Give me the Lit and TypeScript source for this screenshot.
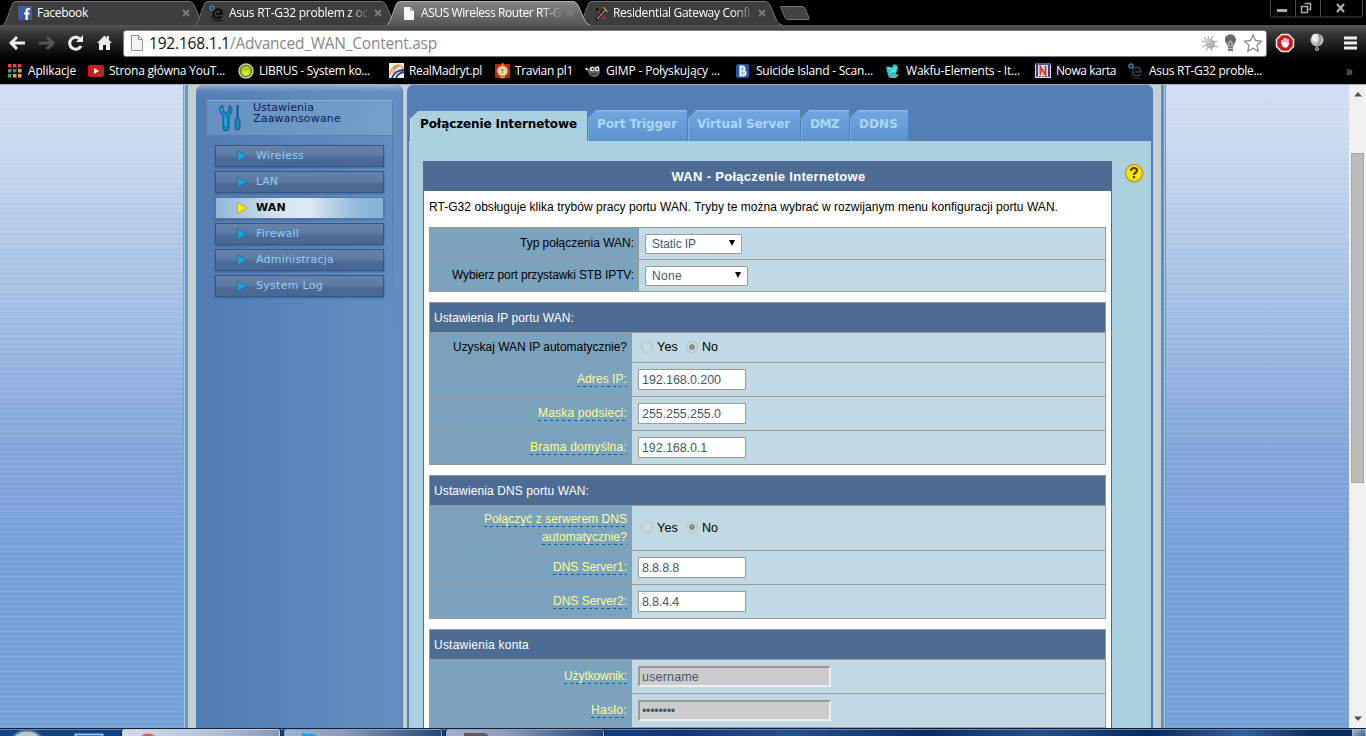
import { LitElement, html, css, svg } from "lit";
import { customElement } from "lit/decorators.js";

const t = (text: string, w: number, cls = "") => html`<span class="fit ${cls}" data-w=${w}>${text}</span>`;

const ie = (dark: string) => svg`
  <path d="M4.5 8.5A4.2 4.2 0 0 1 13 8.6H7M4.5 8.5a4.4 4.4 0 0 0 8 2.6" fill="none" stroke=${dark} stroke-width="2.2"/>
  <path d="M3 11c0 3 2 4.600 4.500 4.600h6" fill="none" stroke=${dark} stroke-width="1"/>
  <circle cx="3" cy="3" r="2" fill="none" stroke="#2b86b4" stroke-width="1.500"/>`;
const icon = (body: unknown, w = 16) => html`<svg class="ico" width=${w} height="16" viewBox="0 0 ${w} 16">${body}</svg>`;

const icons: Record<string, unknown> = {
  fb: svg`<rect x="1" y="1" width="14" height="14" fill="#3f5c9c"/><path d="M13 4h-1.500q-1.800 0-1.800 2v9M7 8.500h5.500" fill="none" stroke="#fff" stroke-width="2.200"/>`,
  asus: ie("#0b0b0b"),
  asus2: ie("#343434"),
  page: svg`<path d="M3 2h6l4 4v9H3z" fill="#f6f6f6"/><path d="M9 2v4h4z" fill="#aaa"/>`,
  tools: svg`<path d="M3 4l9 10" stroke="#c92026" stroke-width="1.800"/><path d="M12 4L3 15" stroke="#111" stroke-width="2.500"/><path d="M12 5L4 14" stroke="#ddd" stroke-width="1"/><path d="M1 5l3-3 3 2-3 3z" fill="#111" stroke="#4c4c2c"/><path d="M8 2h3l4 4-1 2-3-4z" fill="#c9b52a" stroke="#333" stroke-width=".6"/>`,
  yt: svg`<rect y="2" width="16" height="12" rx="2" fill="#c91f1f"/><path d="M6 5l5 3-5 3z" fill="#fff"/>`,
  librus: svg`<circle cx="8" cy="8" r="7" fill="#6a7b1f" stroke="#c6c9c2" stroke-width="1.500"/><circle cx="8" cy="8" r="5" fill="#a9cf12"/><ellipse cx="8" cy="10" rx="3.500" ry="2.500" fill="#d4ea39"/>`,
  real: svg`<rect width="15" height="15" fill="#f3f1ee"/><path d="M1 12Q2 3 9 2q5 1 5 5M4 10Q5 5 10 3M8 2q-3 3-3 6" fill="none" stroke="#d39b55" stroke-width="1.500"/><path d="M3 15Q6 7 15 7M7 15q2-5 8-6" fill="none" stroke="#2c458f" stroke-width="1.800"/>`,
  travian: svg`<rect y="1" width="15" height="14" fill="#b62420"/><circle cx="7.500" cy="8" r="5" fill="#e9dfc2" stroke="#d9a52b" stroke-width="1.400"/><path d="M7.500 0v3M5 14.500h5" stroke="#d9a52b" stroke-width="1.600"/><path d="M5.500 6.500h4M7.500 6.500v4" stroke="#a8812a" stroke-width="1.200"/>`,
  gimp: svg`<path d="M1 5l4 1 2-3 3 1 4-2 1 6q0 5-5 6-6 0-7-5z" fill="#6b6459"/><circle cx="7" cy="6" r="2.300" fill="#eee"/><circle cx="12" cy="6" r="2.300" fill="#eee"/><circle cx="7.500" cy="6" r="1" fill="#111"/><circle cx="12" cy="6" r="1" fill="#111"/><circle cx="1.500" cy="6" r="1.200" fill="#ddd"/><path d="M5 11q4 1 7-1" stroke="#222" fill="none"/>`,
  b: svg`<rect x="1" y="1" width="13" height="14" rx="2" fill="#2455a8"/><path d="M5 3v10h3q3 0 3-3 0-2-2-2 1-1 1-2 0-3-3-3z" fill="#bcd9f8" stroke="#fff" stroke-width="1.200"/><path d="M7 6h1M7 10h1" stroke="#2455a8"/>`,
  wakfu: svg`<path d="M3 13l6-3 5 2-3 3H5z" fill="#8d9c9e"/><path d="M1 4l4-.5 2 1.500L8 1.500l3 0 1 1 1 3-2 5-4 3-4-1-1-4z" fill="#24c9c7"/><path d="M3 5l4 2 5-3M5 9.500l6-2" stroke="#8cf3e9" fill="none"/>`,
  n: svg`<rect width="16" height="15" fill="#d8dbe6"/><path d="M2 2v12M14 2v12" stroke="#2c4678" stroke-width="2"/><path d="M0 1h16" stroke="#3d5f96" stroke-width="2"/><path d="M5.500 12V4l5 8V3" fill="none" stroke="#d6392b" stroke-width="1.800"/><path d="M1 13.500h14" stroke="#9b4550" stroke-dasharray="2 1"/>`,
  apps: svg`${[0, 1, 2].map(r => [0, 1, 2].map(c => svg`<rect x=${1 + c * 5} y=${1 + r * 5} width="3.500" height="3.500" fill=${[["#e8453c", "#e8453c", "#e8453c"], ["#3aa757", "#2f7de1", "#f6a821"], ["#3aa757", "#f6a821", "#f6a821"]][r][c]}/>`))}`,
};

const tabs = [
  ["fb", "Facebook", 51], ["asus", "Asus RT-G32 problem z oc", 139], ["page", "ASUS Wireless Router RT-G", 140], ["tools", "Residential Gateway Confi", 137],
] as const;
const marks: [string, string, number, number, number][] = [
  ["apps", "Aplikacje", 7, 28, 48], ["yt", "Strona główna YouT...", 88, 109, 116], ["librus", "LIBRUS - System ko...", 238, 259, 111],
  ["real", "RealMadryt.pl", 389, 409, 73], ["travian", "Travian pl1", 495, 515, 58], ["gimp", "GIMP - Połyskujący ...", 585, 606, 114],
  ["b", "Suicide Island - Scan...", 735, 756, 117], ["wakfu", "Wakfu-Elements - It...", 885, 906, 114], ["n", "Nowa karta", 1035, 1056, 60],
  ["asus2", "Asus RT-G32 proble...", 1128, 1149, 113],
];
const nav: [string, number][] = [["Wireless", 48], ["LAN", 22], ["WAN", 30], ["Firewall", 43], ["Administracja", 78], ["System Log", 67]];
const pageTabs: [string, number, number][] = [["Połączenie Internetowe", 177, 157], ["Port Trigger", 99, 80], ["Virtual Server", 112, 93], ["DMZ", 48, 29], ["DDNS", 58, 39]];

const tip = (text: string, w: number) => html`<span class="tip">${t(text, w)}</span>`;
const radios = html`<i class="radio"></i><span class="yes">${t("Yes", 21)}</span><i class="radio on"></i><span class="no">${t("No", 16)}</span>`;
const input = (v: string, w: number) => html`<div class="input">${t(v, w)}</div>`;
const row = (label: unknown, field: unknown, cls = "") => html`<div class="row ${cls}"><div class="label">${label}</div><div class="field">${field}</div></div>`;

@customElement("app-root")
class AppRoot extends LitElement {
  static styles = css`
    :host { display: block; width: 1366px; height: 736px; overflow: hidden; }
    * { box-sizing: border-box; }
    svg { display: block; flex: none; }
    .fit { display: inline-block; white-space: nowrap; }
    .screen { width: 1366px; height: 736px; display: flex; flex-direction: column; background: #000; font-family: "Liberation Sans", Arial, sans-serif; font-size: 12px; }
    .strip { height: 25px; display: flex; padding-left: 3px; position: relative; flex: none; font: 12px/16px "Open Sans", "Noto Sans", sans-serif; color: #fff; }
    .tab { position: relative; width: 204px; margin-right: -12px; height: 25px; display: flex; padding: 5px 0 0 14px; flex: none; }
    .tab.active { z-index: 2; }
    .shape { position: absolute; left: 0; top: 0; }
    .tab .ico { position: relative; }
    .title { position: relative; margin-left: 4px; width: 142px; height: 17px; overflow: hidden; }
    .title.fade { -webkit-mask-image: linear-gradient(90deg, #000 120px, transparent 142px); }
    .close { position: relative; margin: 4px 0 0 3px; }
    .newtab { margin: 5px 0 0 7px; }
    .win { margin-left: auto; margin-right: 3px; }
    .toolbar { height: 35px; flex: none; display: flex; align-items: center; background: linear-gradient(#565656 0, #4a4a4a 3px, #383838 8px, #080808 30px, #000); padding-left: 9px; }
    .navs { width: 114px; height: 35px; flex: none; }
    .omni { height: 27px; width: 1144px; display: flex; align-items: center; background: #fff; border: 1px solid #777; border-radius: 3px; padding-left: 6px; margin-top: 1px; }
    .url { margin-left: 5px; font: 15.500px/22px "Open Sans", "Noto Sans", sans-serif; color: #888; display: flex; }
    .host { color: #111; }
    .omniicons { margin-left: auto; margin-right: 0; }
    .tools { margin-left: 6px; }
    .marks { height: 24px; flex: none; display: grid; font: 12px/22px "Open Sans", "Noto Sans", sans-serif; color: #fff; }
    .mark { grid-area: 1 / 1; display: flex; align-items: center; height: 22px; }
    .mark .ico { margin-right: 5px; }
    .more { color: #888; font-size: 14px; }
    .page { height: 644px; flex: none; display: flex; border-top: 1px solid #aaa; background: #c5d0d5; }
    .stripes { width: 183px; background: repeating-linear-gradient(transparent 0 1px, rgba(255,255,255,.13) 1px 2px, transparent 2px 5px), linear-gradient(#cfdef0 0, #cbdaf1 50px, #bccfeb 110px, #a6c1e5 200px, #92b2df 290px, #81a5da 370px, #779fd8 480px, #779fd8); }
    .seam { width: 5px; background: linear-gradient(90deg, #79a3cc 0 1px, #a0d0de 1px 2px, #6798c6 2px 4px, #6d91b8 4px); }
    .seam.right { background: linear-gradient(90deg, #6391bd 0 1px, #5585ba 1px 2px, #6c9fcb 2px 3px, #a2cbde 3px 4px, #6b99c0 4px); }
    .side { margin-left: 8px; width: 207px; border-radius: 7px 7px 0 0; background: linear-gradient(rgba(165,190,220,.8), rgba(110,150,200,.35) 6px, transparent 12px), linear-gradient(90deg, #507cb4, #5f8abc 70%, #648ec0); border-right: 1px solid #4f77a8; padding: 15px 9px 0 10px; }
    .sidehead { height: 36px; background: linear-gradient(100deg, #658fc0, #75a0ca); border: 1px solid #5680ae; border-top-color: #8bb0d3; display: flex; color: #0b1d5b; }
    .sidehead svg { margin: 3px 0 0 11px; }
    .sidehead .lines { margin: 1px 0 0 5px; font: 11px/11px "DejaVu Sans", sans-serif; }
    .lines div { height: 11px; }
    .nav { padding: 9px 8px 0; margin: 0; border: solid #537bad; border-width: 0 1px; height: 240px; border-image: linear-gradient(#537bad, transparent) 1; }
    .item { height: 22px; margin-bottom: 4px; display: flex; align-items: center; background: linear-gradient(#6683aa, #5d7ba4 45%, #4b6a94 60%, #486894); border: 1px solid #35577f; box-shadow: 0 1px 2px rgba(30,60,110,.45); color: #8fcdf5; font: 11px/20px "DejaVu Sans", sans-serif; padding: 0 0 0 20px; }
    .item svg { margin-right: 7px; }
    .item.cur { background: linear-gradient(90deg, #8eb6d8, #dae6f2 40%, #dce7f3 56%, #90b9da 85%, #86b2d5); color: #000; font-weight: bold; border-color: #55799f; }
    .main { margin-left: 4px; width: 746px; border-radius: 6px 6px 0 0; background: #537fb6; padding: 25px 2px 0; display: flex; flex-direction: column; }
    .ptabs { height: 31px; display: flex; padding-left: 1px; flex: none; }
    .ptab { position: relative; height: 31px; margin-right: 1px; display: flex; padding: 6px 0 0 8px; clip-path: polygon(0 8px, 8px 0, 100% 0, 100% 100%, 0 100%); background: linear-gradient(#8ab9e8 0 1px, #70a6df 2px, #5c92cf); border-left: 1px solid #79aee2; color: #aad8f6; font: bold 12px/16px "DejaVu Sans", sans-serif; }
    .ptab.cur { background: #abd1e0; color: #000; height: 30px; margin-top: 1px; padding: 5px 0 0 9px; border-color: #c8e4ed; }
    .content { background: #abd1e0; flex: 1; padding: 20px 7px 0 14px; display: flex; align-items: flex-start; }
    .panel { width: 689px; height: 567px; flex: none; background: #fff; border: 1px solid #4d6c93; border-bottom: 0; padding: 0 5px; overflow: hidden; }
    .ptitle { height: 29px; margin: 0 -5px; padding-left: 2px; background: #4d6c93; color: #fff; font: bold 13px/29px "Liberation Sans", sans-serif; text-align: center; }
    .intro { height: 36px; line-height: 32px; }
    .help { margin: 2px 0 0 12px; }
    .table { width: 677px; border: 1px solid #999; background: #999; margin-bottom: 10px; display: grid; gap: 1px; }
    .thead { height: 29px; background: #4d6c93; color: #fff; line-height: 30px; padding-left: 4px; }
    .row { display: grid; grid-template-columns: 201px 1fr; gap: 1px; height: 33px; }
    .wide .row { grid-template-columns: 208px 1fr; height: 31px; }
    .row.r29 { height: 29px; }
    .row.r44 { height: 44px; }
    .label { background: #7ba3bd; text-align: right; padding: 0 4px 2px 0; line-height: 18px; display: flex; flex-direction: column; align-items: flex-end; justify-content: center; }
    .r44 .label { padding-bottom: 0; }
    .field { background: #c0d9e2; padding-left: 6px; display: flex; align-items: center; font-size: 12.500px; line-height: 19px; }
    .tip { color: #fffc92; height: 18px; display: block; position: relative; }
    .tip .fit::after { content: ""; display: block; margin-top: -2px; height: 1px; background: repeating-linear-gradient(90deg, #006699 0 3px, transparent 3px 6px); }
    .input { width: 108px; height: 21px; background: #fff; border: 1px solid #999; padding-left: 3px; color: #44586a; line-height: 20px; }
    .input.off { width: 193px; background: #ccc; border: 2px solid; border-color: #999 #eee #eee #999; padding-left: 2px; line-height: 18px; }
    .select { height: 20px; width: 97px; border: 1px solid #999; border-radius: 1px; background: #fff; display: flex; align-items: center; justify-content: space-between; padding: 1px 5px 0 6px; color: #44586a; font-size: 12px; }
    .select svg { margin-top: -2px; }
    .select.two { width: 103px; }
    .radio { width: 12px; height: 12px; border-radius: 50%; border: 1px solid #b0bfc5; background: radial-gradient(#cfdde2, #c1d2d8); margin: 0 4px 2px 3px; flex: none; }
    .radio.on { margin-left: 8px; background: radial-gradient(#849096 0 2.500px, #cad8dd 3.500px); }
    .scroll { width: 17px; background: #f0f0f0; display: flex; flex-direction: column; align-items: center; padding: 7px 0 0 0; }
    .thumb { width: 13px; height: 330px; background: #bbb; border: 1px solid #a8a8a8; margin: 56px 0 233px; }
    .task { height: 8px; flex: none; display: flex; border-top: 1px solid #111c35; box-shadow: inset 0 1px #6788bb; background: linear-gradient(90deg, #174282, #123d7b 45%, #13386f 50%, #26508c 58%, #0d2b63 68%, #26508a 76%, #0b275d 84%, #35619a 91%, #0d2b61 96%); gap: 4px; overflow: hidden; }
    .start { width: 118px; flex: none; }
    .app { width: 158px; height: 9px; flex: none; border: 1px solid #cbd5e5; outline: 1px solid #14264c; border-radius: 2px; background: linear-gradient(90deg, #d2dae9, #b2bfd5 60%, #8296bb); padding-left: 17px; }
    .app.b { background: linear-gradient(90deg, #a0b1d0, #8e9fbd 35%, #244577); border-color: #8da5ca; }
    .desk { margin-left: auto; width: 14px; height: 9px; border: 1px solid #a1b5cd; background: linear-gradient(135deg, #9eb5ce, #385f90); }
  `;

  async firstUpdated() {
    await document.fonts.ready;
    this.renderRoot.querySelectorAll<HTMLElement>(".fit").forEach(el => {
      const n = (el.textContent || "").length;
      el.style.letterSpacing = `${(Number(el.dataset.w) - el.getBoundingClientRect().width) / n}px`;
    });
  }

  render() {
    return html`<div class="screen">
      <div class="strip">
        ${tabs.map(([ic, name, w], i) => html`<div class="tab ${i === 2 ? "active" : ""}">
          <svg class="shape" width="204" height="25"><defs><linearGradient id="g" x2="0" y2="1"><stop stop-color="#858585"/><stop offset="1" stop-color="#565656"/></linearGradient></defs>
          <path d="M-1 25Q2 24 3 21L9 5Q10 1.500 13 1.500H186Q189 1.500 191 5L198 21Q199 24 203 25" fill=${i === 2 ? "url(#g)" : "#3d3d3d"} stroke=${i === 2 ? "#b1b1b1" : "#737373"}/></svg>
          ${icon(icons[ic])}<div class="title ${i ? "fade" : ""}">${t(name, w)}</div>
          <svg class="close" width="8" height="8"><path d="M1 1l6 6M7 1L1 7" stroke="#7d7d7d" stroke-width="1.800"/></svg>
        </div>`)}
        <svg class="newtab" width="36" height="17"><path d="M3 1.500h21q2 0 3 2l4 9q1 2-1 2H10q-2 0-3-2L3 3.500q-1-2 0-2z" fill="#424242" stroke="#777"/></svg>
        <svg class="win" width="93" height="18" fill="none"><path d="M.5 0v15q0 2 2 2h88q2 0 2-2V0M25.500 0v17M50.500 0v17" stroke="#4a4a4a"/><path d="M7 10.500h10" stroke="#aaa" stroke-width="3"/><path d="M34.500 3.500h6v6h-2M31.500 6.500h6v6h-6z" stroke="#aaa" stroke-width="1.500"/><path d="M67 4l7 8M74 4l-7 8" stroke="#aaa" stroke-width="2.200"/></svg>
      </div>
      <div class="toolbar">
        <svg class="navs" width="114" height="35" fill="none">
          <path d="M16 18H3M8 12l-6 6 6 6" stroke="#eee" stroke-width="3"/>
          <path d="M30 18h13M38 12l6 6-6 6" stroke="#555" stroke-width="3"/>
          <path d="M72 21a6 6 0 1 1-1.500-7.500" stroke="#eee" stroke-width="3"/><path d="M67 17h7v-7z" fill="#eee"/>
          <path d="M95.500 10.500L88 18h2v7h4v-5h3v5h4v-7h2l-3-3v-4h-2v2z" fill="#eee"/>
        </svg>
        <div class="omni">
          <svg width="14" height="16"><path d="M1.500.5h7l4 4v11h-11z" fill="#f4f4f4" stroke="#929292"/><path d="M8.500.5v4h4" fill="none" stroke="#929292"/></svg>
          <div class="url">${t("192.168.1.1", 81, "host")}${t("/Advanced_WAN_Content.asp", 207)}</div>
          <svg class="omniicons" width="66" height="24" fill="none">
            <ellipse cx="10.500" cy="13" rx="4.500" ry="5" fill="#b5b5b5" transform="rotate(-35 10.500 13)"/><path d="M2 10l4 1M2 16l4-2M6 20l2-4M12 20l-1-4M18 16l-4-1M17 10l-4 1M13 5l-2 4M8 5l1 4M4 6l3 4" stroke="#999"/><circle cx="8" cy="10" r="2.500" fill="#c9c9c9"/>
            <path d="M25 9.500a5.500 5.500 0 1 1 9.500 3l-1.500 3h-5l-1.500-3Q25 11.500 25 9.500z" fill="#696969"/><path d="M29 15v-4q1.500-2 3 0v4" stroke="#ddd"/><path d="M28 16.500h5M28 19h5" stroke="#777" stroke-width="2"/>
            <path d="M53 4l2.500 5.500 6 .8-4.500 4 1.200 6-5.200-3-5.200 3 1.200-6-4.500-4 6-.8z" stroke="#8a8a8a" stroke-width="1.300"/>
          </svg>
        </div>
        <svg class="tools" width="92" height="35" fill="none">
          <path d="M8.500 9.500h7l5 5v7l-5 5h-7l-5-5v-7z" fill="#cf1717" stroke="#eee" stroke-width="1.500"/><path d="M9 17v2l1.500 3h3.500l2-4" fill="#fff" stroke="#fff"/><path d="M9 19v-4M11 18v-5M13 18v-5M15 18v-4" stroke="#fff" stroke-width="1.300"/>
          <circle cx="44" cy="15" r="6.500" fill="#bbb"/><ellipse cx="42" cy="13" rx="3" ry="4" fill="#eee"/><path d="M46 9q3 5-1 12M44 21v5" stroke="#777"/><circle cx="44" cy="24" r="1.500" stroke="#bbb"/>
          <path d="M71 13h13M71 18h13M71 23h13" stroke="#eee" stroke-width="3.200"/>
        </svg>
      </div>
      <div class="marks">
        ${marks.map(([ic, name, x, tx, w]) => html`<div class="mark" style="margin-left:${x}px">${icon(icons[ic], tx - x - 5)}${t(name, w)}</div>`)}
        <div class="mark more" style="margin-left:1346px">»</div>
      </div>
      <div class="page">
        <div class="stripes"></div><div class="seam"></div>
        <div class="side">
          <div class="sidehead">
            <svg width="30" height="30" fill="none"><path d="M2 3q-1 6 3 8.500V23q0 4 3 4t3-4V11.500Q15 9 13.500 3l-2.500-1.500V7L8 9 5 7V1.500z" fill="#1786bd" stroke="#0d5b93"/><path d="M7.500 13v9M3.500 4v3" stroke="#36bae0" stroke-width="1.500"/><path d="M19.500 1v14" stroke="#0c559b" stroke-width="2"/><path d="M17 17q0-3 2.500-3t2.500 3v6q0 3-2.500 3T17 23z" fill="#1888b6" stroke="#0d5b93"/></svg>
            <div class="lines"><div>${t("Ustawienia", 61)}</div><div>${t("Zaawansowane", 88)}</div></div>
          </div>
          <div class="nav">${nav.map(([n, w]) => html`<div class="item ${n === "WAN" ? "cur" : ""}">
            <svg width="13" height="14"><path d="M1.500 1.500L11 7l-9.500 5.500z" fill=${n === "WAN" ? "#fff000" : "#1fa0d0"} stroke=${n === "WAN" ? "#d7a112" : "#1278b4"}/></svg>${t(n, w)}</div>`)}</div>
        </div>
        <div class="main">
          <div class="ptabs">${pageTabs.map(([n, w, tw], i) => html`<div class="ptab ${i ? "" : "cur"}" style="width:${w}px">${t(n, tw)}</div>`)}</div>
          <div class="content">
            <div class="panel">
              <div class="ptitle">${t("WAN - Połączenie Internetowe", 194)}</div>
              <div class="intro">${t("RT-G32 obsługuje klika trybów pracy portu WAN. Tryby te można wybrać w rozwijanym menu konfiguracji portu WAN.", 629)}</div>
              <div class="table wide">
                ${row(t("Typ połączenia WAN:", 114), html`<div class="select">${t("Static IP", 44)}<svg width="8" height="8"><path d="M1 1h6L4 7z"/></svg></div>`)}
                ${row(t("Wybierz port przystawki STB IPTV:", 182), html`<div class="select two">${t("None", 30)}<svg width="8" height="8"><path d="M1 1h6L4 7z"/></svg></div>`)}
              </div>
              <div class="table">
                <div class="thead">${t("Ustawienia IP portu WAN:", 140)}</div>
                ${row(t("Uzyskaj WAN IP automatycznie?", 174), radios, "r29")}
                ${row(tip("Adres IP:", 50), input("192.168.0.200", 79))}
                ${row(tip("Maska podsieci:", 89), input("255.255.255.0", 79))}
                ${row(tip("Brama domyślna:", 97), input("192.168.0.1", 65))}
              </div>
              <div class="table">
                <div class="thead">${t("Ustawienia DNS portu WAN:", 155)}</div>
                ${row(html`${tip("Połączyć z serwerem DNS", 143)}${tip("automatycznie?", 85)}`, radios, "r44")}
                ${row(tip("DNS Server1:", 74), input("8.8.8.8", 37))}
                ${row(tip("DNS Server2:", 74), input("8.8.4.4", 37))}
              </div>
              <div class="table">
                <div class="thead">${t("Ustawienia konta", 95)}</div>
                ${row(tip("Użytkownik:", 63), html`<div class="input off">${t("username", 57)}</div>`)}
                ${row(tip("Hasło:", 36), html`<div class="input off">${t("••••••••", 33)}</div>`)}
              </div>
            </div>
            <svg class="help" width="21" height="21"><circle cx="10.500" cy="11" r="9" fill="#345" opacity=".2"/><circle cx="10" cy="10" r="8.500" fill="#ffe800" stroke="#d99b13" stroke-width="1.500"/><path d="M7 8q0-3 3-3t3 2.500q0 1.500-2 2.500-1 .5-1 2" fill="none" stroke="#5b3810" stroke-width="2.200"/><rect x="8.800" y="13" width="2.400" height="2.200" fill="#5b3810"/></svg>
          </div>
        </div>
        <div class="seam right" style="margin-left:8px"></div><div class="stripes"></div>
        <div class="scroll"><svg width="8" height="5"><path d="M0 4.500L4 0l4 4.500z" fill="#505050"/></svg><div class="thumb"></div><svg width="8" height="5"><path d="M0 .5h8L4 5z" fill="#505050"/></svg></div>
      </div>
      <div class="task">
        <svg class="start" width="118" height="8"><ellipse cx="27" cy="16" rx="17" ry="14.500" fill="#b6c9d2" stroke="#56788e" stroke-width="2"/><path d="M75.500 8V5.500h27V8" fill="#12264f" stroke="#8dc1f5" stroke-width="2"/></svg>
        <div class="app"><svg width="20" height="8"><ellipse cx="8" cy="11" rx="9" ry="7.500" fill="#e45c4e"/></svg></div>
        <div class="app b"><svg width="26" height="8"><path d="M-6 8Q-2 1 5 4q8-2 11 4z" fill="#08a9ed"/></svg></div>
        <div class="app b"><svg width="34" height="8"><rect x="-9" y="3" width="33" height="12" rx="4" fill="#605b54"/></svg></div>
        <div class="desk"></div>
      </div>
    </div>`;
  }
}
